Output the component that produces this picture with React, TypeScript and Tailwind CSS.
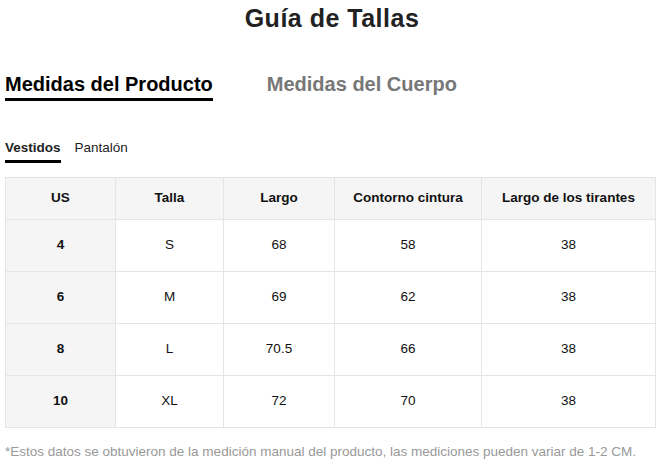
const rows = [
  { us: "4", talla: "S", largo: "68", cintura: "58", tirantes: "38" },
  { us: "6", talla: "M", largo: "69", cintura: "62", tirantes: "38" },
  { us: "8", talla: "L", largo: "70.5", cintura: "66", tirantes: "38" },
  { us: "10", talla: "XL", largo: "72", cintura: "70", tirantes: "38" },
];

const heads = ["US", "Talla", "Largo", "Contorno cintura", "Largo de los tirantes"];
const widths = ["w-[110px]", "w-[108px]", "w-[111px]", "w-[147px]", "w-[174px]"];

export default function App() {
  return (
    <div className="w-[664px] h-[468px] bg-white px-[5px] font-['Liberation_Sans',Arial,sans-serif] text-black">
      <h1 className="pt-[4px] text-center text-[25px] font-bold leading-[28px] tracking-[0.5px] text-[#222]">
        Guía de Tallas
      </h1>

      <div className="mt-[40px] flex gap-[54px]">
        <div className="border-b-[3px] border-black">
          <span className="text-[20px] font-bold leading-[24px]">Medidas del Producto</span>
        </div>
        <div>
          <span className="text-[20px] font-bold leading-[24px] text-[#777]">Medidas del Cuerpo</span>
        </div>
      </div>

      <div className="mt-[39px] flex gap-[14px] text-[13.5px] leading-[16px]">
        <div className="border-b-[3px] border-black pb-[4px] font-bold text-[#222]">Vestidos</div>
        <div className="text-[#222]">Pantalón</div>
      </div>

      <table className="mt-[14px] w-[650px] table-fixed border-collapse text-[13.5px] text-[#111]">
        <thead>
          <tr className="h-[42px] bg-[#f5f5f5]">
            {heads.map((h, i) => (
              <th key={h} className={`${widths[i]} border border-[#e5e5e5] text-center font-bold`}>
                {h}
              </th>
            ))}
          </tr>
        </thead>
        <tbody>
          {rows.map((r) => (
            <tr key={r.us} className="h-[52px]">
              <td className="border border-[#e5e5e5] bg-[#f5f5f5] text-center font-bold">{r.us}</td>
              <td className="border border-[#e5e5e5] text-center">{r.talla}</td>
              <td className="border border-[#e5e5e5] text-center">{r.largo}</td>
              <td className="border border-[#e5e5e5] text-center">{r.cintura}</td>
              <td className="border border-[#e5e5e5] text-center">{r.tirantes}</td>
            </tr>
          ))}
        </tbody>
      </table>

      <p className="mt-[16px] text-[13.5px] leading-[16px] text-[#999]">
        *Estos datos se obtuvieron de la medición manual del producto, las mediciones pueden variar de 1-2 CM.
      </p>
    </div>
  );
}
